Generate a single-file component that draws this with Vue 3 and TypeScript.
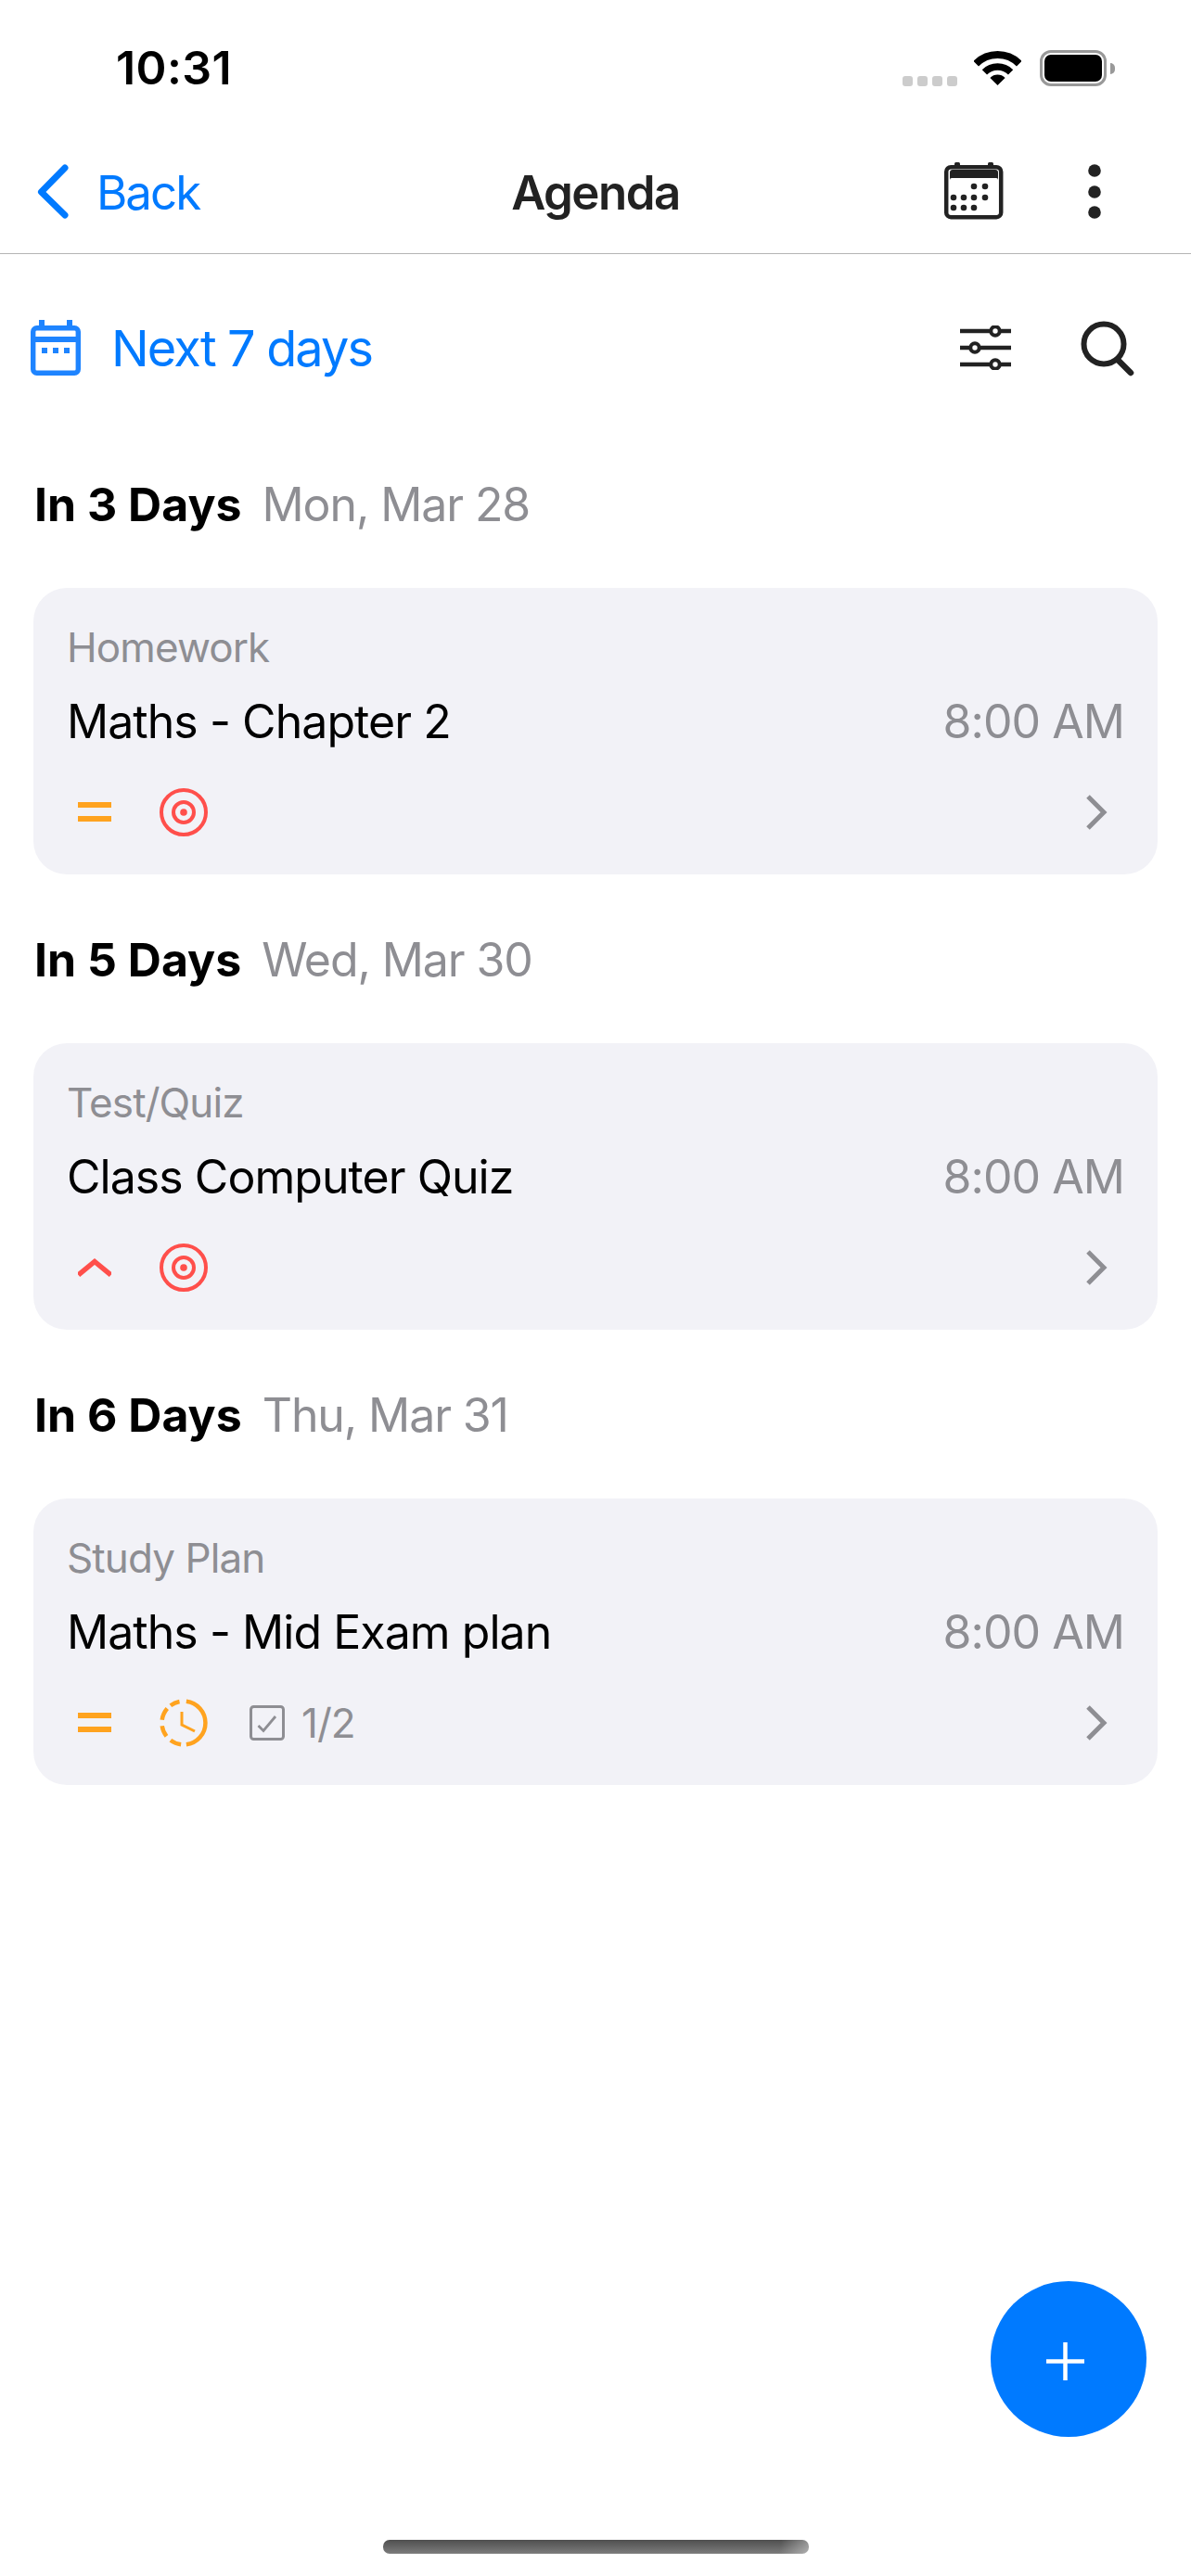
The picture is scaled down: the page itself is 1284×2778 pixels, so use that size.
<script setup lang="ts">
interface AgendaItem {
  category: string
  title: string
  time: string
  priority: 'medium' | 'high'
  status: 'target' | 'clock'
  subtasks?: string
}

interface AgendaSection {
  label: string
  date: string
  item: AgendaItem
}

const sections: AgendaSection[] = [
  {
    label: 'In 3 Days',
    date: 'Mon, Mar 28',
    item: { category: 'Homework', title: 'Maths - Chapter 2', time: '8:00 AM', priority: 'medium', status: 'target' },
  },
  {
    label: 'In 5 Days',
    date: 'Wed, Mar 30',
    item: { category: 'Test/Quiz', title: 'Class Computer Quiz', time: '8:00 AM', priority: 'high', status: 'target' },
  },
  {
    label: 'In 6 Days',
    date: 'Thu, Mar 31',
    item: { category: 'Study Plan', title: 'Maths - Mid Exam plan', time: '8:00 AM', priority: 'medium', status: 'clock', subtasks: '1/2' },
  },
]

// dashed ring of the clock icon, angles in degrees clockwise from the top
const clockArcs: [number, number][] = [[7, 173], [187, 217], [232, 262], [278, 311], [323, 349]]

function arc([from, to]: [number, number]) {
  const r = 23.5
  const point = (deg: number) => {
    const a = (deg * Math.PI) / 180
    return `${(26 + r * Math.sin(a)).toFixed(2)} ${(26 - r * Math.cos(a)).toFixed(2)}`
  }
  return `M${point(from)}A${r} ${r} 0 ${to - from > 180 ? 1 : 0} 1 ${point(to)}`
}

const calendarDots = [
  [33, 26], [45, 26],
  [11, 38], [22, 38], [33, 38], [45, 38],
  [11, 49], [22, 49], [33, 49],
]
</script>

<template>
  <div class="screen">
    <header class="top">
      <div class="status-bar">
        <span class="clock">10:31</span>
        <div class="status-icons">
          <div class="signal">
            <i v-for="n in 4" :key="n" />
          </div>
          <svg class="wifi" width="51" height="37" viewBox="0 0 51 37">
            <path d="M2.2 13.7A33 33 0 0 1 48.8 13.7" fill="none" stroke="#000" stroke-width="8" />
            <path d="M11.4 22.9A20 20 0 0 1 39.6 22.9" fill="none" stroke="#000" stroke-width="7.5" />
            <path d="M25.5 37L17.4 28.9A11.5 11.5 0 0 1 33.6 28.9Z" fill="#000" />
          </svg>
          <div class="battery"><i /></div>
          <div class="battery-cap" />
        </div>
      </div>
      <nav class="nav">
        <div class="nav-back">
          <svg width="40" height="64" viewBox="0 0 40 64">
            <path d="M33 6L7.5 32L33 57" fill="none" stroke="#007aff" stroke-width="7" stroke-linecap="round" stroke-linejoin="round" />
          </svg>
          <span>Back</span>
        </div>
        <div class="nav-title">Agenda</div>
        <div class="nav-actions">
          <svg width="66" height="64" viewBox="0 0 66 64">
            <rect x="12" y="0" width="6" height="6" rx="1.5" fill="#222" />
            <rect x="48" y="0" width="6" height="6" rx="1.5" fill="#222" />
            <rect x="3.2" y="5.2" width="59" height="54" rx="5" fill="#fff" stroke="#222" stroke-width="4.5" />
            <path d="M7 19V11a3 3 0 0 1 3-3H56a3 3 0 0 1 3 3v8a2 2 0 0 0-2-2H9a2 2 0 0 0-2 2Z" fill="#222" />
            <circle v-for="(d, i) in calendarDots" :key="i" :cx="d[0]" :cy="d[1]" r="3.3" fill="#222" />
          </svg>
          <svg class="more" width="14" height="60" viewBox="0 0 14 60">
            <circle cx="7" cy="7" r="6.8" fill="#222" />
            <circle cx="7" cy="30" r="6.8" fill="#222" />
            <circle cx="7" cy="52" r="6.8" fill="#222" />
          </svg>
        </div>
      </nav>
    </header>

    <div class="filter">
      <svg width="54" height="60" viewBox="0 0 54 60">
        <path d="M9 0h6v8H9zM39 0h6v8h-6z" fill="#1e84ff" />
        <rect x="2.7" y="8.7" width="48.6" height="48.6" rx="4" fill="none" stroke="#1e84ff" stroke-width="5.4" />
        <path d="M3 21h48" stroke="#1e84ff" stroke-width="6" />
        <path d="M12 30h6v6h-6zM24 30h6v6h-6zM36 30h6v6h-6z" fill="#1e84ff" />
      </svg>
      <span class="filter-label">Next 7 days</span>
      <div class="filter-actions">
        <svg width="55" height="48" viewBox="0 0 55 48">
          <path d="M0 6h55M0 24h55M0 42h55" stroke="#222" stroke-width="4.5" />
          <circle cx="38" cy="6" r="4.7" fill="#fff" stroke="#222" stroke-width="4" />
          <circle cx="16" cy="24" r="4.7" fill="#fff" stroke="#222" stroke-width="4" />
          <circle cx="38" cy="42" r="4.7" fill="#fff" stroke="#222" stroke-width="4" />
        </svg>
        <svg width="64" height="64" viewBox="0 0 64 64">
          <circle cx="28" cy="28" r="21.5" fill="none" stroke="#222" stroke-width="6" />
          <path d="M43 45L57 59" stroke="#222" stroke-width="6.5" stroke-linecap="round" />
        </svg>
      </div>
    </div>

    <main class="agenda">
      <section v-for="section in sections" :key="section.label" class="day">
        <h2 class="day-head">
          <span class="day-label">{{ section.label }}</span>
          <span class="day-date">{{ section.date }}</span>
        </h2>
        <article class="card">
          <div class="card-category">{{ section.item.category }}</div>
          <div class="card-main">
            <span class="card-title">{{ section.item.title }}</span>
            <span class="card-time">{{ section.item.time }}</span>
          </div>
          <div class="card-meta">
            <svg v-if="section.item.priority === 'medium'" class="priority" width="36" height="22" viewBox="0 0 36 22">
              <path d="M0 0h36v6H0zM0 15h36v6H0z" fill="#ffa31f" />
            </svg>
            <svg v-else class="priority" width="36" height="22" viewBox="0 0 36 22">
              <path d="M0.5 19L18 4.5L35.5 19" fill="none" stroke="#ff4f4b" stroke-width="5.5" />
            </svg>

            <svg v-if="section.item.status === 'target'" class="state" width="52" height="52" viewBox="0 0 52 52">
              <circle cx="26" cy="26" r="24" fill="none" stroke="#ff4f4b" stroke-width="4" />
              <circle cx="26" cy="26" r="11" fill="none" stroke="#ff4f4b" stroke-width="4" />
              <circle cx="26" cy="26" r="3.8" fill="#ff4f4b" />
            </svg>
            <svg v-else class="state" width="52" height="52" viewBox="0 0 52 52">
              <path v-for="(a, i) in clockArcs" :key="i" :d="arc(a)" fill="none" stroke="#ffa31f" stroke-width="4.5" />
              <path d="M24 14V28L38 35" fill="none" stroke="#ffa31f" stroke-width="3" />
            </svg>

            <template v-if="section.item.subtasks">
              <svg class="subtask-box" width="38" height="38" viewBox="0 0 38 38">
                <rect x="1.5" y="1.5" width="35" height="35" rx="3" fill="none" stroke="#8e8e93" stroke-width="3" />
                <path d="M9.5 22L15 27.5L28 12" fill="none" stroke="#8e8e93" stroke-width="2.8" />
              </svg>
              <span class="subtask-count">{{ section.item.subtasks }}</span>
            </template>

            <svg class="card-arrow" width="24" height="40" viewBox="0 0 24 40">
              <path d="M3 3L20 20L3 37" fill="none" stroke="#8e8e93" stroke-width="5" />
            </svg>
          </div>
        </article>
      </section>
    </main>

    <button class="fab" type="button" aria-label="Add">
      <svg width="168" height="168" viewBox="0 0 168 168">
        <path d="M60 86.5h41M80.5 66v41" stroke="#fff" stroke-width="4.5" />
      </svg>
    </button>
    <div class="home-indicator" />
  </div>
</template>

<style scoped>
.screen {
  position: relative;
  height: 2778px;
  overflow: hidden;
  background: #fff;
  font-family: Inter, "Liberation Sans", sans-serif;
  color: #000;
}

/* status bar + nav */
.top {
  height: 274px;
  border-bottom: 1.5px solid #b4b4b4;
  box-sizing: border-box;
}
.status-bar {
  display: flex;
  align-items: center;
  justify-content: space-between;
  height: 146px;
  padding: 0 82px 0 125px;
}
.clock {
  font-size: 50px;
  font-weight: 600;
  letter-spacing: 0.4px;
  line-height: 60px;
}
.status-icons {
  display: flex;
  align-items: flex-start;
}
.signal {
  display: flex;
  gap: 5px;
  margin-top: 28px;
  margin-right: 18px;
}
.signal i {
  width: 11px;
  height: 11px;
  border-radius: 3px;
  background: #ccc;
}
.wifi {
  margin-top: 1px;
  margin-right: 20px;
}
.battery {
  box-sizing: border-box;
  width: 72px;
  height: 39px;
  border: 3.5px solid #999;
  border-radius: 12px;
  padding: 2px;
}
.battery i {
  display: block;
  height: 100%;
  border-radius: 7px;
  background: #000;
}
.battery-cap {
  width: 5px;
  height: 12px;
  margin-top: 14px;
  margin-left: 4px;
  border-radius: 0 6px 6px 0;
  background: #999;
}

.nav {
  display: grid;
  grid-template-columns: 1fr auto 1fr;
  align-items: center;
  height: 122px;
}
.nav-back {
  display: flex;
  align-items: center;
  padding-left: 37px;
  color: #007aff;
  font-size: 51px;
  letter-spacing: -2px;
}
.nav-back span {
  margin-left: 27px;
}
.nav-title {
  font-size: 51px;
  font-weight: 600;
  letter-spacing: -1.5px;
  color: #222;
}
.nav-actions {
  display: flex;
  align-items: center;
  justify-content: flex-end;
  padding-right: 97px;
}
.more {
  margin-left: 90px;
}

/* date range filter */
.filter {
  display: flex;
  align-items: center;
  height: 202px;
  padding-left: 33px;
}
.filter-label {
  margin-left: 33px;
  font-size: 54px;
  letter-spacing: -1.85px;
  color: #007aff;
}
.filter-actions {
  display: flex;
  align-items: center;
  gap: 72px;
  margin-left: auto;
  padding-right: 58px;
}

/* agenda list */
.agenda {
  padding: 38px 36px 0;
}
.day {
  padding-bottom: 62px;
}
.day-head {
  display: flex;
  align-items: center;
  gap: 22px;
  height: 60px;
  margin: 0 0 60px;
  padding-left: 1px;
  font-size: 50px;
  font-weight: 400;
}
.day-label {
  font-weight: 700;
}
.day-date {
  letter-spacing: -1.1px;
  color: #8e8e93;
}
.card {
  box-sizing: border-box;
  height: 309px;
  padding: 36px 36px 0;
  border-radius: 36px;
  background: #f2f2f7;
}
.card-category {
  font-size: 44px;
  line-height: 56px;
  letter-spacing: -0.9px;
  color: #8e8e93;
}
.card-main {
  display: flex;
  justify-content: space-between;
  align-items: center;
  height: 58px;
  margin-top: 23px;
  font-size: 50px;
  letter-spacing: -0.95px;
}
.card-time {
  color: #8e8e93;
}
.card-meta {
  display: flex;
  align-items: center;
  height: 52px;
  margin-top: 43px;
}
.priority {
  margin-left: 12px;
}
.state {
  margin-left: 52px;
}
.subtask-box {
  margin-left: 45px;
}
.subtask-count {
  margin-left: 18px;
  font-size: 44px;
  letter-spacing: -1px;
  color: #8e8e93;
}
.card-arrow {
  margin-left: auto;
  margin-right: 18px;
}

.fab {
  position: absolute;
  left: 1068px;
  top: 2460px;
  width: 168px;
  height: 168px;
  padding: 0;
  border: 0;
  border-radius: 50%;
  background: #007aff;
}
.fab svg {
  display: block;
}
.home-indicator {
  position: absolute;
  left: 413px;
  top: 2739px;
  width: 459px;
  height: 15px;
  border-radius: 7px;
  background: linear-gradient(100deg, transparent 93%, rgba(255, 255, 255, 0.4) 100%), linear-gradient(180deg, #4f4f4f, #7c7c7c);
}
</style>
